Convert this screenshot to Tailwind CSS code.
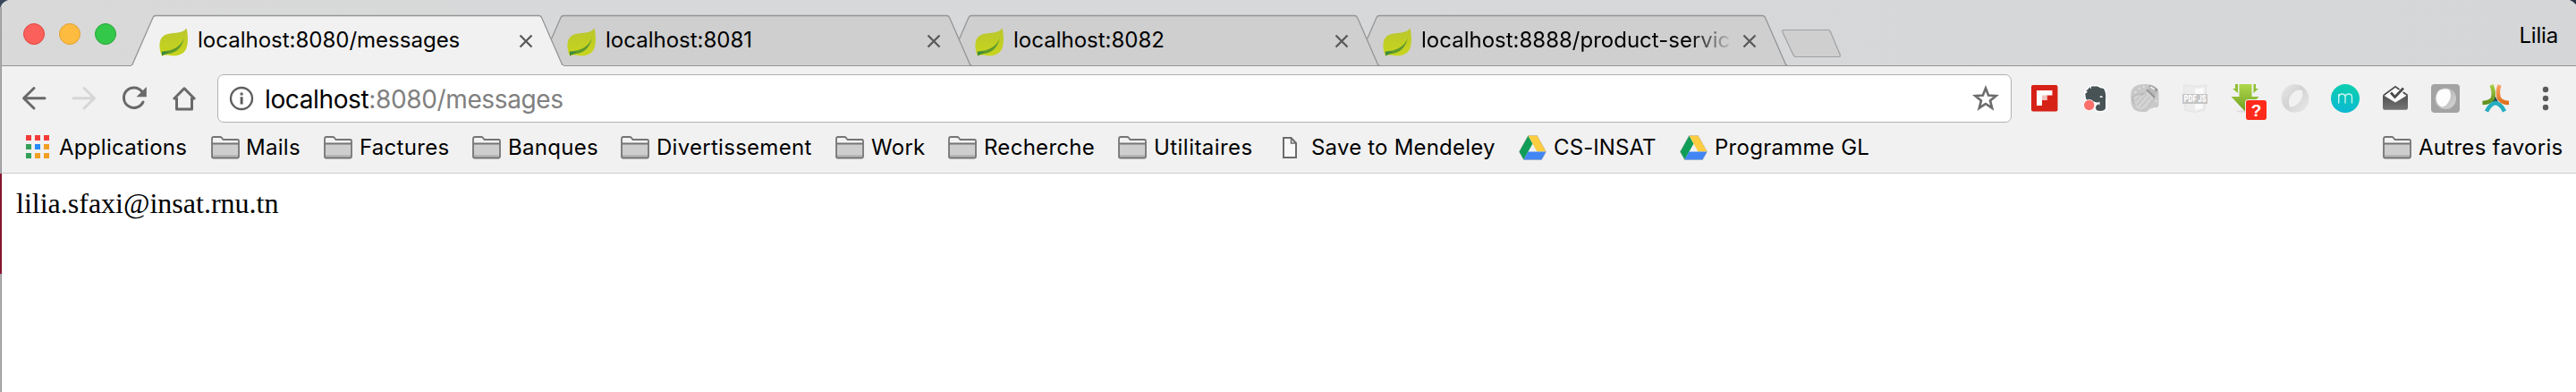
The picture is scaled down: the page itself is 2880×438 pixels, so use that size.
<!DOCTYPE html>
<html lang="fr">
<head>
<meta charset="utf-8">
<title>localhost:8080/messages</title>
<script src="https://cdn.jsdelivr.net/npm/@tailwindcss/browser@4"></script>
</head>
<body class="bg-white overflow-hidden">
<!-- Shared symbols -->
<svg class="absolute size-0" aria-hidden="true">
  <defs>
    <linearGradient id="leafFill" x1="0" y1="0" x2="0" y2="1"><stop offset="0" stop-color="#b9c62c"/><stop offset="1" stop-color="#c8d51c"/></linearGradient>
    <linearGradient id="greenArrow" x1="0" y1="0" x2="0" y2="1"><stop offset="0" stop-color="#b0d84a"/><stop offset="1" stop-color="#6f9f22"/></linearGradient>
    <linearGradient id="teal" x1="0.5" y1="0" x2="0.3" y2="1"><stop offset="0" stop-color="#0bcfae"/><stop offset="1" stop-color="#0cb8d4"/></linearGradient>
    <linearGradient id="inbox" x1="0" y1="0" x2="0" y2="1"><stop offset="0" stop-color="#505050"/><stop offset="1" stop-color="#757575"/></linearGradient>
    <linearGradient id="swirlA" x1="0" y1="0" x2="1" y2="1"><stop offset="0" stop-color="#e8e8e8"/><stop offset="1" stop-color="#bdbdbd"/></linearGradient>
    <linearGradient id="swirlB" x1="0" y1="0" x2="1" y2="1"><stop offset="0" stop-color="#c0c0c0"/><stop offset="1" stop-color="#ebebeb"/></linearGradient>
    <linearGradient id="bulb" x1="0" y1="0" x2="1" y2="1"><stop offset="0" stop-color="#a8a8a8"/><stop offset="1" stop-color="#d6d6d6"/></linearGradient>
    <linearGradient id="armG" x1="0" y1="0" x2="0" y2="1"><stop offset="0" stop-color="#a8cf45"/><stop offset="1" stop-color="#5f8f1e"/></linearGradient>
    <linearGradient id="armO" x1="0" y1="0" x2="0" y2="1"><stop offset="0" stop-color="#fba56a"/><stop offset="1" stop-color="#e0701c"/></linearGradient>
  </defs>
  <symbol id="leaf" viewBox="0 0 32 32">
    <path d="M30.500 0.500C32.500 9 32.500 18 30 24C27 30 20 32 13 31C8 30.500 5 30 3 31.500C1 27 -0.500 20 1 15C3 8 9 6.500 16 6C23 5.500 28 4.500 30.500 0.500Z" fill="url(#leafFill)"/>
    <path d="M28 11C25 20 16 26 3 26.500L3 31.500C5 29.500 9 29.500 13 28.500C21 26.500 26 20 28 11Z" fill="#5f9a2c"/>
    <path d="M2.500 27L11 26.500C9 28.500 5 29 3.500 31.500Z" fill="#3d8a3a"/>
  </symbol>
  <symbol id="close" viewBox="0 0 16 16"><path d="M1.500 1.500L14.500 14.500M14.500 1.500L1.500 14.500" stroke="#5a5a5a" stroke-width="2.300" fill="none"/></symbol>
  <symbol id="tab" viewBox="0 0 486 74">
    <path d="M0.500 73.500C1.500 73 2 72.500 2.500 71L25 19.500Q26 17.500 28 17.500H456.500Q458.500 17.500 459.500 19.500L482 71C482.500 72.500 483 73 484.500 73.500Z" fill="currentColor"/>
    <path d="M0.500 73.500C1.500 73 2 72.500 2.500 71L25 19.500Q26 17.500 28 17.500H456.500Q458.500 17.500 459.500 19.500L482 71C482.500 72.500 483 73 484.500 73.500" fill="none" stroke="#949597" stroke-width="1.300"/>
  </symbol>
  <symbol id="folder" viewBox="0 0 32 26">
    <path d="M1 23V3.500Q1 1 3 1H10Q11 1 12 2L13.500 4H29.500Q31 4 31 5.500V23Q31 24.500 29.500 24.500H2.500Q1 24.500 1 23Z" fill="#f3f3f3"/>
    <path d="M1 8.500H31V24.500H1Z" fill="#cecece"/>
    <path d="M1 21H31V24H1Z" fill="#b7b7b7"/>
    <path d="M1 8.500H31M1 23V3Q1 1 3 1H10Q11 1 12 2L13.500 4H29.500Q31 4 31 5.500V23Q31 24.500 29.500 24.500H2.500Q1 24.500 1 23Z" fill="none" stroke="#757575" stroke-width="1.800"/>
  </symbol>
  <symbol id="drive" viewBox="0 0 31 28">
    <path d="M10.500 0.500L15.500 9.500L5.500 27.500L0.500 18.500Z" fill="#109d58"/>
    <path d="M10.500 0.500H20.500L30.500 18.500H20.500Z" fill="#ffcd40"/>
    <path d="M10.500 18.500H30.500L25.500 27.500H5.500Z" fill="#4285f4"/>
    <path d="M10.500 0.500H20.500L30.500 18.500L25.500 27.500H5.500L0.500 18.500Z" fill="none" stroke="#888" stroke-opacity=".45" stroke-width=".7"/>
  </symbol>
</svg>

<div class="relative flex h-[438px] w-[2880px] flex-col overflow-hidden bg-white font-['Inter',sans-serif] text-black">

  <!-- Tab strip -->
  <header class="relative z-10 flex h-[74px] shrink-0 border-b border-[#939496] bg-linear-to-r from-[#d9d9d9] via-[#d6d8da] to-[#d5d6d8]">
    <div class="flex w-[146px] shrink-0 items-start gap-4 pt-[26px] pl-[26px]">
      <span class="size-6 rounded-full border border-[#e0443e] bg-[#fc605b]"></span>
      <span class="size-6 rounded-full border border-[#dea033] bg-[#fdbc40]"></span>
      <span class="size-6 rounded-full border border-[#27a535] bg-[#34c84a]"></span>
    </div>

    <div class="relative z-40 h-[74px] w-[486px] shrink-0 text-[#f1f1f1]">
      <svg class="absolute inset-0 h-[74px] w-[486px]"><use href="#tab"/></svg>
      <span class="absolute bottom-0 left-[1px] h-px w-[483px] bg-[#f1f1f1]"></span>
      <div class="relative flex h-[74px] items-start pl-8">
        <svg class="mt-[31px] size-8"><use href="#leaf"/></svg>
        <span class="mt-[29px] ml-[11px] w-[361px] overflow-hidden text-[24px] leading-8 whitespace-nowrap text-black">localhost:8080/messages</span>
        <svg class="mt-[38px] ml-[-2px] size-4"><use href="#close"/></svg>
      </div>
    </div>

    <div class="relative z-30 -ml-[30px] h-[74px] w-[486px] shrink-0 text-[#cfcfcf]">
      <svg class="absolute inset-0 h-[74px] w-[486px]"><use href="#tab"/></svg>
      <span class="absolute bottom-0 left-0 h-px w-[485px] bg-[#939496]"></span>
      <div class="relative flex h-[74px] items-start pl-8">
        <svg class="mt-[31px] size-8"><use href="#leaf"/></svg>
        <span class="mt-[29px] ml-[11px] w-[361px] overflow-hidden text-[24px] leading-8 whitespace-nowrap text-black">localhost:8081</span>
        <svg class="mt-[38px] ml-[-2px] size-4"><use href="#close"/></svg>
      </div>
    </div>

    <div class="relative z-20 -ml-[30px] h-[74px] w-[486px] shrink-0 text-[#cfcfcf]">
      <svg class="absolute inset-0 h-[74px] w-[486px]"><use href="#tab"/></svg>
      <span class="absolute bottom-0 left-0 h-px w-[485px] bg-[#939496]"></span>
      <div class="relative flex h-[74px] items-start pl-8">
        <svg class="mt-[31px] size-8"><use href="#leaf"/></svg>
        <span class="mt-[29px] ml-[11px] w-[361px] overflow-hidden text-[24px] leading-8 whitespace-nowrap text-black">localhost:8082</span>
        <svg class="mt-[38px] ml-[-2px] size-4"><use href="#close"/></svg>
      </div>
    </div>

    <div class="relative z-10 -ml-[30px] h-[74px] w-[486px] shrink-0 text-[#cfcfcf]">
      <svg class="absolute inset-0 h-[74px] w-[486px]"><use href="#tab"/></svg>
      <span class="absolute bottom-0 left-0 h-px w-[485px] bg-[#939496]"></span>
      <div class="relative flex h-[74px] items-start pl-8">
        <svg class="mt-[31px] size-8"><use href="#leaf"/></svg>
        <span class="mt-[29px] ml-[11px] w-[349px] overflow-hidden bg-linear-to-r from-black from-[86%] to-transparent to-[100%] bg-clip-text text-[24px] leading-8 whitespace-nowrap text-transparent">localhost:8888/product-servic</span>
        <svg class="mt-[38px] ml-[10px] size-4"><use href="#close"/></svg>
      </div>
    </div>

    <svg class="mt-[32px] -ml-[9px] h-8 w-[68px] shrink-0" viewBox="0 0 68 32"><path d="M3.500 1.500H53Q54.500 1.500 55.500 3.500L66 28.500Q67 31.500 65 31.500H17Q15 31.500 14 29.500L2 4Q1 1.500 3.500 1.500Z" fill="#cfcfcf" stroke="#a0a1a3" stroke-width="1.200"/></svg>
    <span class="mt-6 mr-5 ml-auto text-[24px] leading-8 tracking-[-0.2px]">Lilia</span>

    <svg class="absolute top-0 left-0 size-4" viewBox="0 0 16 16"><path d="M0 0H9Q2 2 0 10Z" fill="#39475a"/></svg>
    <svg class="absolute top-0 right-0 h-2 w-3" viewBox="0 0 12 8"><path d="M5 0H12V5Q9 1.500 5 0Z" fill="#2b3345"/></svg>
  </header>

  <!-- Toolbar -->
  <div class="flex h-[71px] shrink-0 items-start bg-[#f1f1f1]">
    <div class="flex w-[243px] shrink-0 gap-6 pt-5 pl-[22px]">
      <svg class="size-8" viewBox="0 0 32 32"><path d="M16 4.500L4.500 15.700L16 27M5 15.700H28" fill="none" stroke="#696969" stroke-width="3" stroke-linecap="round" stroke-linejoin="round"/></svg>
      <svg class="size-8" viewBox="0 0 32 32"><path d="M16 4.500L27.500 15.700L16 27M4 15.700H27" fill="none" stroke="#d6d6d6" stroke-width="3" stroke-linecap="round" stroke-linejoin="round"/></svg>
      <svg class="size-8" viewBox="0 0 32 32"><path d="M24.500 8A11.300 11.300 0 1 0 26 20" fill="none" stroke="#696969" stroke-width="3" stroke-linecap="round"/><path d="M29.800 3V14.300H18.500Z" fill="#696969"/></svg>
      <svg class="size-8" viewBox="0 0 32 32"><path d="M4 17L16 4.800L28 17M7.500 15V28H24.500V15" fill="none" stroke="#696969" stroke-width="3" stroke-linejoin="round"/></svg>
    </div>
    <div class="mt-[9px] flex h-[54px] w-[2006px] shrink-0 items-center rounded-[7px] border border-[#b1b1b1] bg-white pl-3">
      <svg class="size-7 shrink-0" viewBox="0 0 28 28"><circle cx="14" cy="14" r="12" fill="none" stroke="#5f5f5f" stroke-width="2.400"/><path d="M12.600 7.500h3v3h-3zM12.600 12.300h3v8.200h-3z" fill="#5f5f5f"/></svg>
      <div class="mt-px ml-[12px] text-[28px] leading-8 tracking-[-0.37px] whitespace-nowrap">localhost<span class="text-[#808080]">:8080/messages</span></div>
      <svg class="mr-3 ml-auto size-8" viewBox="0 0 32 32"><path d="M16 4.500L19.100 12.500L27.600 13L21 18.400L23.200 26.700L16 22L8.800 26.700L11 18.400L4.400 13L12.900 12.500Z" fill="none" stroke="#6b6b6b" stroke-width="2.600"/></svg>
    </div>

    <!-- Extensions -->
    <div class="mt-5 ml-[21px] flex gap-6">
      <svg class="size-8" viewBox="0 0 32 32"><rect x="1" y="1" width="29.500" height="29.500" rx="2" fill="#d62117"/><path d="M7 7H24.500V12.500H18.500V18H13V24H7Z" fill="#fff"/><path d="M13 12.500H18.500V18H13Z" fill="#f2c1be"/></svg>
      <svg class="size-8" viewBox="0 0 32 32"><path d="M6 8L12 2.500H19Q22 4.500 26 5Q29 10 28 18V27Q27 30 22 30Q17 30 17 26.500Q17 22.500 20 22.500V20Q17 21.500 15.500 19.500Q13 21 9 20Q5 17 5.500 9Z" fill="#485356" stroke="#fff" stroke-width="3"/><path d="M12 2.500H19Q22 4.500 26 5Q29 10 28 18V27Q27 30 22 30Q17 30 17 26.500Q17 22.500 21.500 22.500V25Q19.500 25 20 26.500Q22 27.500 24 25.500Q25 21.500 22 19.500Q19 21.500 15.500 19.500Q13 21 9 20Q5 17 5.500 10H12Z" fill="#485356"/><path d="M6 8L11 3V8Z" fill="#485356"/><path d="M22 13.500Q24 12 25 15Q23 14.500 21.500 15Z" fill="#fff"/><circle cx="9.700" cy="23.500" r="6.500" fill="#fff"/><circle cx="9.700" cy="23.500" r="5.700" fill="#fb706c"/></svg>
      <svg class="size-8" viewBox="0 0 32 32"><path d="M8 1Q16 -1 24 1Q31 3 31.500 10V23Q31 27 27 26L21 28Q18 32 13 31Q3 31 1 23Q0 20 0.500 9Q2 3 8 1Z" fill="#c9c9c9"/><path d="M1 14L7 11L17 9L22 3L30 8L27 15L18 27Q13 31 7 28L2 19Z" fill="#bababa"/><path d="M3 15Q7 11 13 13L19 8L26 15L17 27Q10 31 6 26Z" fill="#d3d3d3"/><path d="M7 24L18 11M11 26L22 14M5 19L10 14" stroke="#c2c2c2" stroke-width="1.200"/><path d="M18 6L27 15" stroke="#959595" stroke-width="2"/><path d="M21 2L30 7" stroke="#999" stroke-width="3"/><path d="M22 3L27 6" stroke="#f4f4f4" stroke-width="1.500"/><path d="M9 5h1.500M14 3h1.500M5 9h1.500M28 19h1.500" stroke="#eee" stroke-width="1.500"/></svg>
      <svg class="size-8" viewBox="0 0 32 32"><path d="M3.500 1L16 2.500L29 1L27 29L16 31.500L5 29Z" fill="#ececec" stroke="#e2e2e2"/><path d="M16 5L26 4L24.500 27L16 29Z" fill="#fafafa"/><rect x="2" y="11" width="28" height="11" fill="#c5c5c5"/><text x="3.500" y="20.200" textLength="25" lengthAdjust="spacingAndGlyphs" font-family="Roboto" font-weight="900" font-size="10" fill="#fff">PDF JS</text></svg>
      <div class="relative size-8">
        <svg class="size-8" viewBox="0 0 32 32"><ellipse cx="14" cy="30.500" rx="8" ry="1.200" fill="#dcdcdc"/><path d="M5 0H8V10L2 5H5ZM25.500 0H28V5H31L25.500 10Z" fill="#8fbf35"/><path d="M9.500 0H23.500V14H31.500L16 30.500L0.500 14H9.500Z" fill="url(#greenArrow)"/></svg>
        <span class="absolute top-[18px] left-[17px] flex h-[22px] w-[23px] items-center justify-center rounded-[2px] bg-[#ff2a1a] font-['Liberation_Sans'] text-[19px] leading-none font-bold text-white outline outline-[#f1f1f1]">?</span>
      </div>
      <svg class="size-8" viewBox="0 0 32 32"><path d="M18 0.500C8 -1 0 7 0.500 16C1 25 7 31 15 31.500C7 27 6 12 18 7C24 5 28 9 29 12C28 5 24 1 18 0.500Z" fill="url(#swirlA)"/><path d="M14 31.500C24 33 32 25 31.500 16C31 9 27 3 20 1C27 7 26 20 14 25C8 27 4 23 2.500 20C4 27 8 31 14 31.500Z" fill="url(#swirlB)"/></svg>
      <svg class="size-8" viewBox="0 0 32 32"><circle cx="16" cy="16" r="16" fill="url(#teal)"/><path d="M8.700 21.500V11M8.700 14.500Q9.500 11 12.500 11Q16 11 16 14.500V21.500M16 14.500Q16.500 11 19.800 11Q23.500 11 23.500 14.500V21.500" fill="none" stroke="#c5f5ee" stroke-width="1.400"/></svg>
      <svg class="size-8" viewBox="0 0 32 32"><path d="M3 12.500L16 3L29.500 12.500" fill="none" stroke="#4f4f4f" stroke-width="2"/><path d="M4 13L16 4L28 13L16 20.500Z" fill="#fafafa"/><path d="M2 12L16 20.500L30 12V26.500Q30 28.800 28 28.800H4Q2 28.800 2 26.500Z" fill="url(#inbox)"/><path d="M10.500 9.500L15.500 15L25.500 4.500" fill="none" stroke="#fafafa" stroke-width="5"/><path d="M11 9.500L15.500 14.500L25 4.500" fill="none" stroke="#4a4a4a" stroke-width="2.800"/></svg>
      <svg class="size-8" viewBox="0 0 32 32"><rect width="32" height="32" rx="4" fill="#a3a3a3"/><circle cx="16" cy="16" r="12" fill="url(#bulb)"/><path d="M9 7Q14 4 20 6Q24 12 20 19Q17 25 12 25.500Q6 23 5.500 16Q6 10 9 7Z" fill="#fdfdfd"/></svg>
      <svg class="size-8" viewBox="0 0 32 32"><path d="M14 10L19 20L16 22L11 19Z" fill="#1d4751"/><path d="M11.500 1Q15 9 13 16Q10 20.500 1.500 21" fill="none" stroke="url(#armG)" stroke-width="4.500"/><path d="M20.500 1Q17.500 9 20 16Q23 20.500 31 21" fill="none" stroke="url(#armO)" stroke-width="4.500"/><path d="M6 30.500Q10 22 16 21Q22 22 26 30.500" fill="none" stroke="#25aebf" stroke-width="4.500"/></svg>
      <svg class="size-8" viewBox="0 0 32 32" fill="#5a5a5a"><circle cx="16" cy="6" r="3.200"/><circle cx="16" cy="16" r="3.200"/><circle cx="16" cy="26" r="3.200"/></svg>
    </div>
  </div>

  <!-- Bookmarks bar -->
  <nav class="flex h-[49px] shrink-0 items-start border-b border-[#cecece] bg-[#f1f1f1] pl-[29px] text-[24px] leading-8 tracking-[0.28px] whitespace-nowrap">
    <a class="flex w-[207px] shrink-0">
      <svg class="mt-1.5 mr-[11px] h-[26px] w-[26px]" viewBox="0 0 26 26"><path d="M0 0h6v6H0zM10 0h6v6h-6zM20 0h6v6h-6z" fill="#f43b39"/><path d="M0 10h6v6H0zM0 20h6v6H0z" fill="#35a05a"/><path d="M10 10h6v6h-6z" fill="#258bf5"/><path d="M20 10h6v6h-6zM10 20h6v6h-6zM20 20h6v6h-6z" fill="#f0a024"/></svg>
      <span class="mt-[4px]">Applications</span></a>
    <a class="flex w-[126px] shrink-0"><svg class="mt-[7px] mr-[7px] h-[26px] w-8"><use href="#folder"/></svg><span class="mt-[4px]">Mails</span></a>
    <a class="flex w-[166px] shrink-0"><svg class="mt-[7px] mr-[8px] h-[26px] w-8"><use href="#folder"/></svg><span class="mt-[4px]">Factures</span></a>
    <a class="flex w-[166px] shrink-0"><svg class="mt-[7px] mr-[8px] h-[26px] w-8"><use href="#folder"/></svg><span class="mt-[4px]">Banques</span></a>
    <a class="flex w-[240px] shrink-0"><svg class="mt-[7px] mr-[8px] h-[26px] w-8"><use href="#folder"/></svg><span class="mt-[4px]">Divertissement</span></a>
    <a class="flex w-[126px] shrink-0"><svg class="mt-[7px] mr-[8px] h-[26px] w-8"><use href="#folder"/></svg><span class="mt-[4px]">Work</span></a>
    <a class="flex w-[190px] shrink-0"><svg class="mt-[7px] mr-[8px] h-[26px] w-8"><use href="#folder"/></svg><span class="mt-[4px]">Recherche</span></a>
    <a class="flex w-[184px] shrink-0"><svg class="mt-[7px] mr-[8px] h-[26px] w-8"><use href="#folder"/></svg><span class="mt-[4px] tracking-[0.45px]">Utilitaires</span></a>
    <a class="flex w-[264px] shrink-0"><svg class="mt-2 mr-[16px] h-6 w-4" viewBox="0 0 16 24"><path d="M1 1H9.500L15 7V23H1Z" fill="#f8f8f8" stroke="#6c6c6c" stroke-width="2"/><path d="M9.500 1V7H15" fill="none" stroke="#6c6c6c" stroke-width="1.600"/></svg><span class="mt-[4px] tracking-[0.2px]">Save to Mendeley</span></a>
    <a class="flex w-[180px] shrink-0"><svg class="mt-1.5 mr-[8px] h-7 w-[31px]"><use href="#drive"/></svg><span class="mt-[4px] tracking-[0.1px]">CS-INSAT</span></a>
    <a class="flex shrink-0"><svg class="mt-1.5 mr-[8px] h-7 w-[31px]"><use href="#drive"/></svg><span class="mt-[4px]">Programme GL</span></a>
    <a class="ml-auto flex w-[216px] shrink-0"><svg class="mt-[7px] mr-[8px] h-[26px] w-8"><use href="#folder"/></svg><span class="mt-[4px]">Autres favoris</span></a>
  </nav>

  <!-- Page -->
  <main class="flex-1 bg-white pt-[15px] pl-[18px] font-['Liberation_Serif',serif] text-[32px] leading-[37px]">lilia.sfaxi@insat.rnu.tn</main>

  <!-- Window edge -->
  <div class="absolute top-2 left-0 z-20 flex h-[430px] w-0.5 flex-col">
    <span class="h-[186px] bg-linear-to-r from-[#b4b4b6] to-[#8f9092]"></span>
    <span class="h-[112px] bg-[#86152f]"></span>
    <span class="flex-1 bg-linear-to-r from-[#b8b8b8] to-[#8e8e8e]"></span>
  </div>
</div>
</body>
</html>
